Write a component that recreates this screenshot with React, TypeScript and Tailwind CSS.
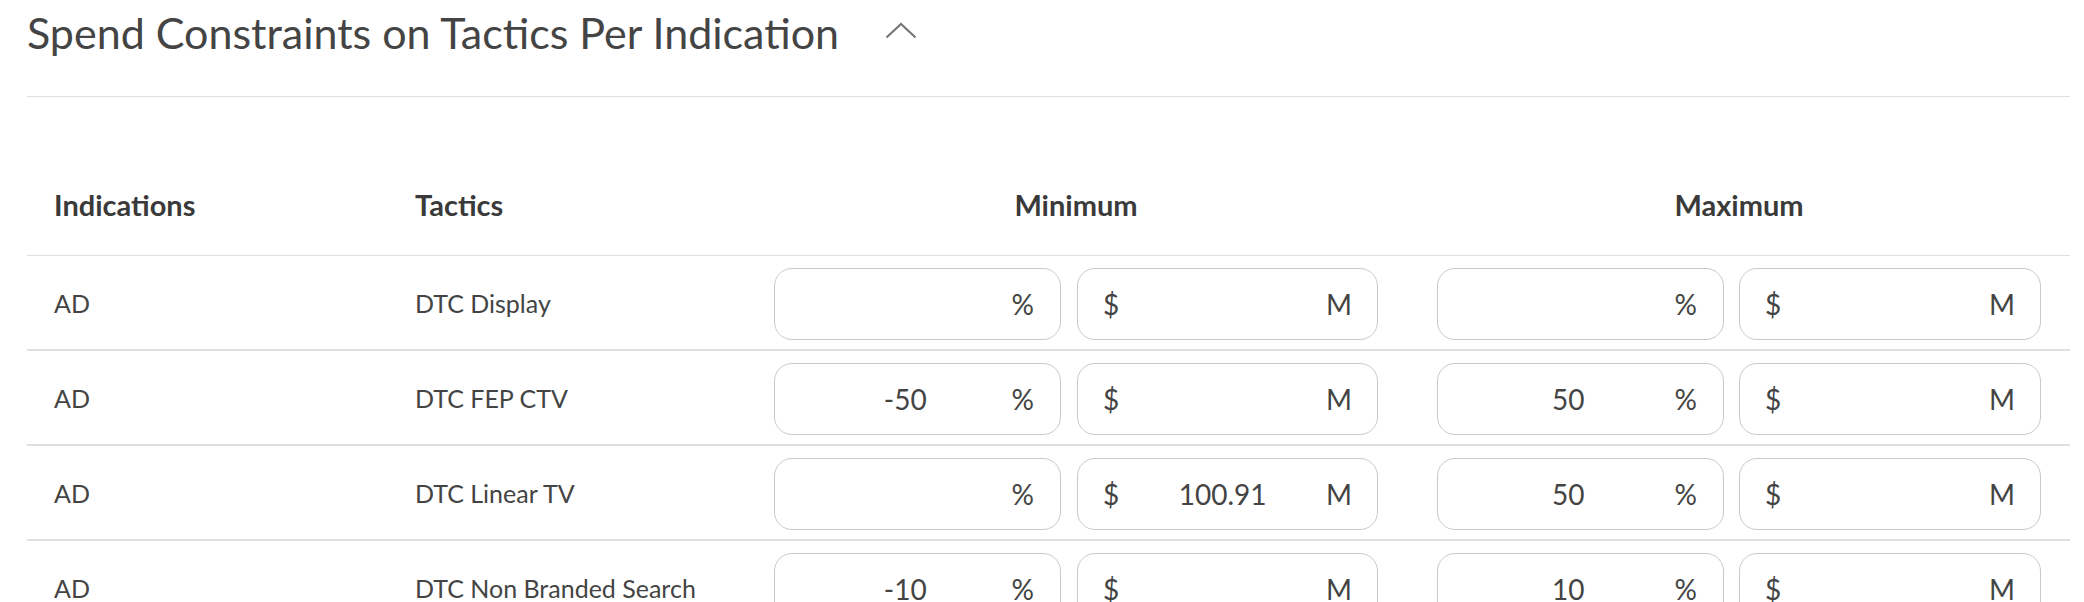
import React from 'react';

type Row = {
    indication: string;
    tactic: string;
    minPct: string;
    minAmt: string;
    maxPct: string;
    maxAmt: string;
};

const rows: Row[] = [
    { indication: 'AD', tactic: 'DTC Display', minPct: '', minAmt: '', maxPct: '', maxAmt: '' },
    { indication: 'AD', tactic: 'DTC FEP CTV', minPct: '-50', minAmt: '', maxPct: '50', maxAmt: '' },
    { indication: 'AD', tactic: 'DTC Linear TV', minPct: '', minAmt: '100.91', maxPct: '50', maxAmt: '' },
    { indication: 'AD', tactic: 'DTC Non Branded Search', minPct: '-10', minAmt: '', maxPct: '10', maxAmt: '' },
];

const PctInput: React.FC<{ value: string }> = ({ value }) => (
    <div className="flex shrink-0 items-center w-[287px] h-[72px] border border-[#c9c9c9] rounded-[18px] pl-[24px] pr-[26px] bg-white">
        <input
            readOnly
            value={value}
            className="flex-1 min-w-0 text-center bg-transparent outline-none text-[28px] text-[#444]"
        />
        <span className="text-[28px] text-[#444]">%</span>
    </div>
);

const AmtInput: React.FC<{ value: string }> = ({ value }) => (
    <div className="flex items-center flex-1 min-w-0 h-[72px] border border-[#c9c9c9] rounded-[18px] pl-[25px] pr-[25px] bg-white">
        <span className="text-[28px] text-[#444]">$</span>
        <input
            readOnly
            value={value}
            className="flex-1 min-w-0 text-center bg-transparent outline-none text-[28px] text-[#444]"
        />
        <span className="text-[28px] text-[#444]">M</span>
    </div>
);

const App: React.FC = () => {
    return (
        <div className="w-[2084px] h-[602px] overflow-hidden bg-white pl-[27px] pr-[14px] font-['Lato',_'Liberation_Sans',_sans-serif] text-[#444]">
            <div className="flex items-center pt-[9px] pb-[39px] border-b border-[#e0e0e0]">
                <h1 className="text-[43px] leading-[48px] font-normal text-[#444] whitespace-nowrap">
                    Spend Constraints on Tactics Per Indication
                </h1>
                <svg className="ml-[46px] mt-[-4px]" width="32" height="18" viewBox="0 0 32 18" fill="none">
                    <path d="M1.5 15.5 L16 2 L30.5 15.5" stroke="#777" strokeWidth="2.2" />
                </svg>
            </div>

            <div className="mt-[64px]">
                <div className="flex h-[95px] items-center pb-[6px] border-b border-[#e0e0e0] text-[29px] font-bold text-[#3a3a3a]">
                    <div className="w-[361px] shrink-0 pl-[27px]">Indications</div>
                    <div className="w-[359px] shrink-0 pl-[27px]">Tactics</div>
                    <div className="w-[663px] shrink-0 pl-[27px] pr-[32px] text-center">Minimum</div>
                    <div className="flex-1 pl-[27px] pr-[29px] text-center">Maximum</div>
                </div>

                {rows.map((r, i) => (
                    <div key={i} className="flex items-center pt-[12px] pb-[9px] border-b-2 border-[#e0e0e0] text-[25px] text-[#444]">
                        <div className="w-[361px] shrink-0 pl-[27px]">{r.indication}</div>
                        <div className="w-[359px] shrink-0 pl-[27px] whitespace-nowrap">{r.tactic}</div>
                        <div className="w-[663px] shrink-0 pl-[27px] pr-[32px] flex gap-[16px]">
                            <PctInput value={r.minPct} />
                            <AmtInput value={r.minAmt} />
                        </div>
                        <div className="flex-1 min-w-0 pl-[27px] pr-[29px] flex gap-[15px]">
                            <PctInput value={r.maxPct} />
                            <AmtInput value={r.maxAmt} />
                        </div>
                    </div>
                ))}
            </div>
        </div>
    );
};

export default App;
